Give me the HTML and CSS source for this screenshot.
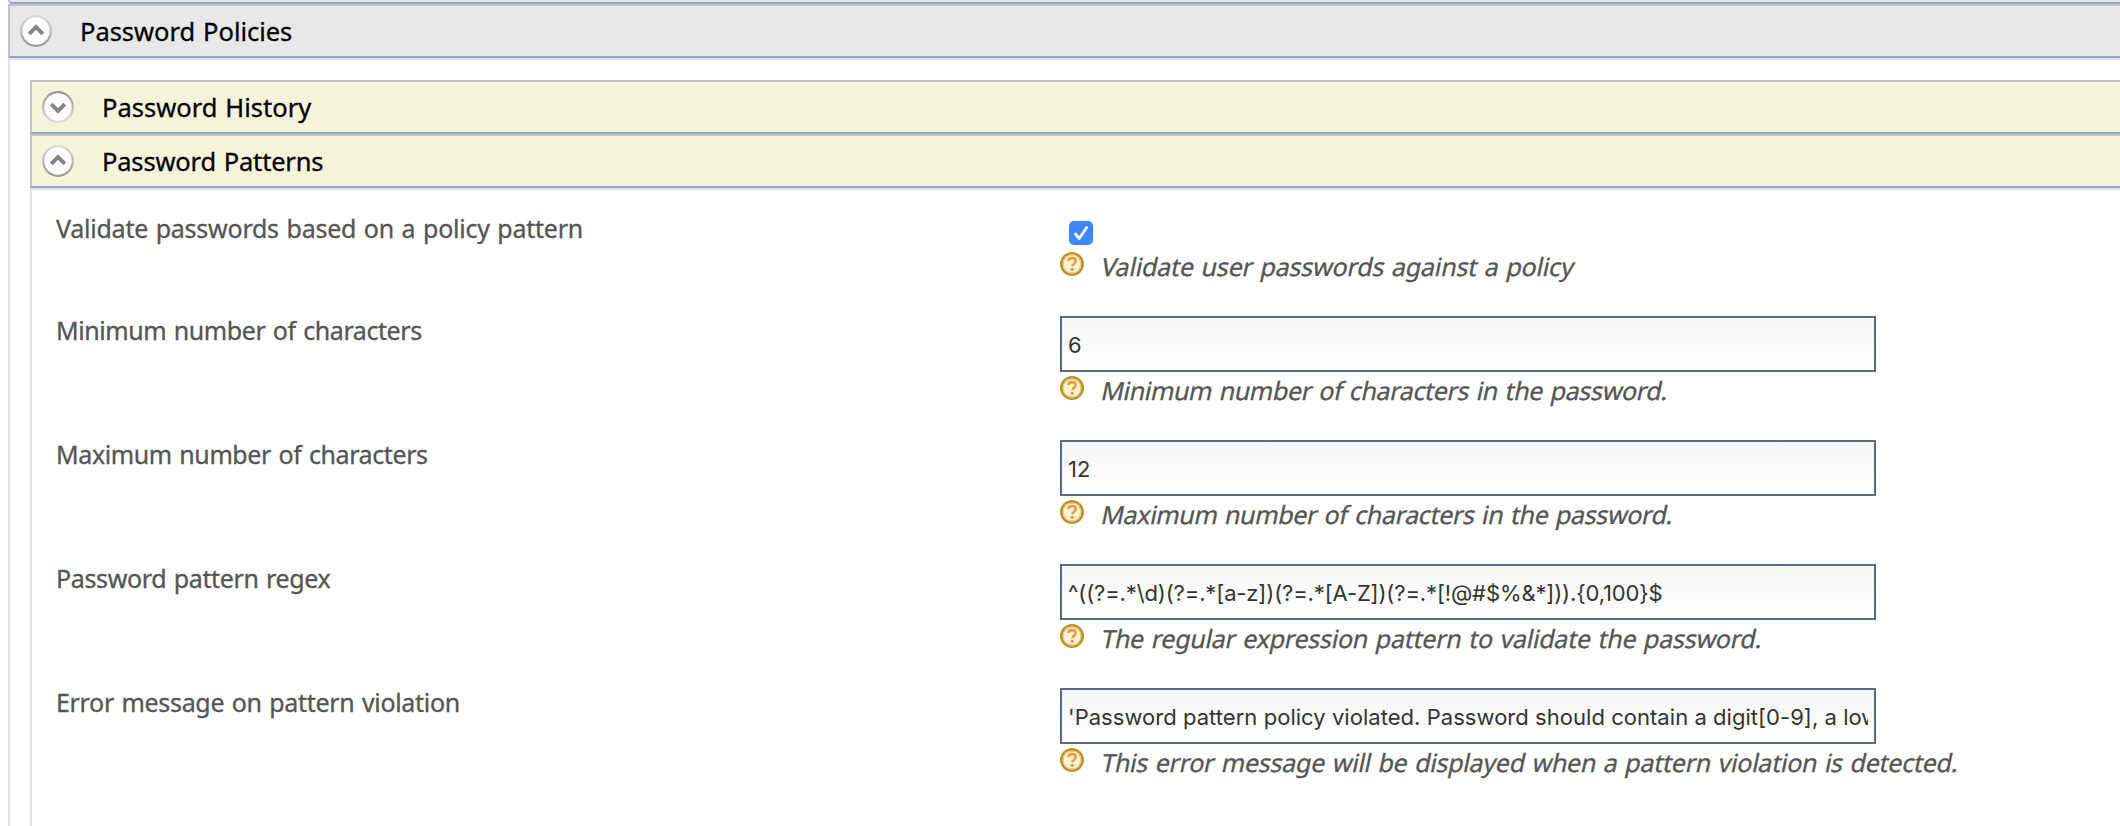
FILE: index.html
```html
<!DOCTYPE html>
<html lang="en">
<head>
<meta charset="utf-8">
<title>Password Policies</title>
<link rel="stylesheet" href="styles.css">
</head>
<body>
<svg class="defs" aria-hidden="true">
  <defs>
    <linearGradient id="rim" x1="0" y1="0" x2="0" y2="1"><stop offset="0" stop-color="#dadada"/><stop offset="1" stop-color="#999"/></linearGradient>
    <symbol id="toggle" viewBox="0 0 32 32"><circle cx="16" cy="16" r="14.800" fill="#fff" stroke="url(#rim)" stroke-width="2.200"/><path d="M9.200 18.800 16 12 22.800 18.800" fill="none" stroke="#858585" stroke-width="4"/></symbol>
    <symbol id="help" viewBox="0 0 24 24"><circle cx="12" cy="12" r="10.700" fill="#fdf3d0" stroke="#bf942f" stroke-width="2.600"/><circle cx="12" cy="12" r="8.800" fill="none" stroke="#e3cc8a" stroke-width="1"/><path d="M8.300 9C8.600 6.800 10 6.100 12 6.100c2.200 0 3.700 1.100 3.700 3 0 2.500-3.200 2.500-3.400 5" fill="none" stroke="#ef9440" stroke-width="2.500"/><circle cx="12.200" cy="17.300" r="1.600" fill="#ef9440"/></symbol>
  </defs>
</svg>
<div class="previous"></div>
<section class="section">
  <h2 class="bar bar-main"><svg class="toggle"><use href="#toggle"/></svg><span class="t-policies">Password Policies</span></h2>
  <div class="section-body">
    <h3 class="bar bar-sub"><svg class="toggle closed"><use href="#toggle"/></svg><span class="t-history">Password History</span></h3>
    <h3 class="bar bar-sub"><svg class="toggle"><use href="#toggle"/></svg><span class="t-patterns">Password Patterns</span></h3>
    <div class="form">
      <div class="row row-check">
        <label class="label l-validate" for="validate">Validate passwords based on a policy pattern</label>
        <div class="field">
          <span class="check" id="validate"><svg viewBox="0 0 24 24"><path d="M6.500 13 10.300 17.500 17.700 6.500"/></svg></span>
          <div class="hint"><svg class="help"><use href="#help"/></svg><span class="hint-text h-validate">Validate user passwords against a policy</span></div>
        </div>
      </div>
      <div class="row">
        <label class="label l-min">Minimum number of characters</label>
        <div class="field">
          <div class="input"><span class="value">6</span></div>
          <div class="hint"><svg class="help"><use href="#help"/></svg><span class="hint-text h-min">Minimum number of characters in the password.</span></div>
        </div>
      </div>
      <div class="row">
        <label class="label l-max">Maximum number of characters</label>
        <div class="field">
          <div class="input"><span class="value">12</span></div>
          <div class="hint"><svg class="help"><use href="#help"/></svg><span class="hint-text h-max">Maximum number of characters in the password.</span></div>
        </div>
      </div>
      <div class="row">
        <label class="label l-regex">Password pattern regex</label>
        <div class="field">
          <div class="input"><span class="value v-regex">^((?=.*\d)(?=.*[a-z])(?=.*[A-Z])(?=.*[!@#$%&amp;*])).{0,100}$</span></div>
          <div class="hint"><svg class="help"><use href="#help"/></svg><span class="hint-text h-regex">The regular expression pattern to validate the password.</span></div>
        </div>
      </div>
      <div class="row">
        <label class="label l-error">Error message on pattern violation</label>
        <div class="field">
          <div class="input"><span class="value v-error">'Password pattern policy violated. Password should contain a digit[0-9], a low</span></div>
          <div class="hint"><svg class="help"><use href="#help"/></svg><span class="hint-text h-error">This error message will be displayed when a pattern violation is detected.</span></div>
        </div>
      </div>
    </div>
  </div>
</section>
</body>
</html>
```
FILE: styles.css
```css
* { box-sizing: border-box; }
html, body { height: 100%; }
body {
  margin: 0;
  overflow: hidden;
  display: flex;
  flex-direction: column;
  background: #fff;
  color: #555;
  font-family: "Noto Sans", "Open Sans", sans-serif;
}
.defs { position: absolute; width: 0; height: 0; }
.previous {
  flex: none;
  height: 4px;
  margin-left: 8px;
  background: #e8e8e8;
  border-bottom: 2px solid #94a6c8;
  border-left: 2px solid #c3c3c5;
  border-bottom-left-radius: 4px;
}
.section {
  flex: 1;
  margin-left: 8px;
  display: flex;
  flex-direction: column;
  min-height: 0;
}
.bar {
  flex: none;
  margin: 0;
  height: 54px;
  display: flex;
  align-items: center;
  gap: 28px;
  padding-left: 10px;
  border: 2px solid #c3c3c5;
  border-right: 0;
  border-bottom-color: #94a6c8;
  color: #000;
  font-size: 25.5px;
  font-weight: 400;
  line-height: 36px;
  word-spacing: 1.4px;
  white-space: nowrap;
  -webkit-text-stroke: 0.3px;
}
.bar-main { background: #e8e8e8; }
.bar-sub { background: #f5f4da; }
.t-policies { letter-spacing: -0.03px; }
.t-patterns { letter-spacing: -0.18px; }
.toggle { flex: none; width: 32px; height: 32px; }
.closed { transform: rotate(180deg); }
.section-body {
  flex: 1;
  min-height: 0;
  display: flex;
  flex-direction: column;
  padding: 20px 0 0 20px;
  border-left: 2px solid #e0e0e0;
  border-top: 2px solid #e0e0e0;
}
.form {
  flex: 1;
  min-height: 0;
  padding: 22px 0 0 24px;
  border-left: 2px solid #e0e0e0;
  border-top: 2px solid #e0e0e0;
}
.row {
  display: grid;
  grid-template-columns: 1004px 1fr;
  height: 124px;
}
.row-check { height: 104px; }
.label {
  font-size: 25px;
  line-height: 29px;
  word-spacing: 1.4px;
  white-space: nowrap;
  -webkit-text-stroke: 0.3px;
}
.row-check .label { padding-top: 2px; }
.l-validate { letter-spacing: -0.24px; }
.l-min { letter-spacing: -0.42px; }
.l-max { letter-spacing: -0.4px; }
.l-regex { letter-spacing: -0.36px; }
.l-error { letter-spacing: -0.32px; }
.field { display: flex; flex-direction: column; }
.row-check .field { padding-top: 9px; }
.check {
  width: 24px;
  height: 24px;
  margin: 0 0 7px 9px;
  border-radius: 5px;
  background: #3b87fb;
}
.check svg { display: block; width: 24px; height: 24px; }
.check path { fill: none; stroke: #fff; stroke-width: 2.8; stroke-linecap: round; stroke-linejoin: round; }
.input {
  width: 816px;
  height: 56px;
  padding: 0 6px;
  border: 2px solid #596a81;
  background: linear-gradient(#f6f6f6, #fff);
  color: #333;
  font-family: Inter, sans-serif;
  font-size: 22px;
  line-height: 54px;
}
.value { display: block; overflow: hidden; white-space: pre; }
.v-regex { letter-spacing: -0.13px; }
.v-error { letter-spacing: 0.04px; }
.hint {
  display: flex;
  align-items: flex-start;
  gap: 18px;
  margin-top: 4px;
}
.row-check .hint { margin-top: 0; }
.help { flex: none; width: 24px; height: 24px; }
.hint-text {
  font-size: 25px;
  line-height: 29px;
  word-spacing: 1.4px;
  white-space: nowrap;
  transform: skewX(-12deg);
  -webkit-text-stroke: 0.3px;
}
.h-validate { letter-spacing: -0.17px; }
.h-min, .h-max { letter-spacing: -0.34px; }
.h-regex { letter-spacing: -0.23px; }
.h-error { letter-spacing: -0.24px; }
```
